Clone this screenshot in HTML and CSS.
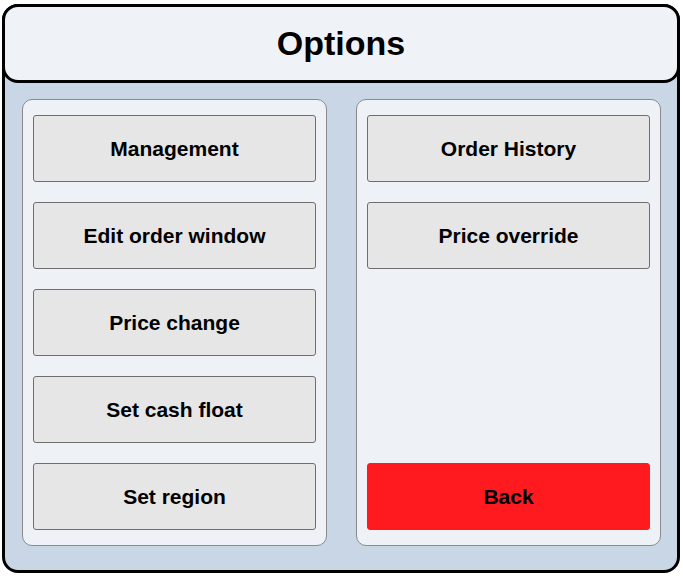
FILE: index.html
```html
<!DOCTYPE html>
<html>
<head>
<meta charset="utf-8">
<link rel="stylesheet" href="styles.css">
</head>
<body>
<div class="frame">
  <div class="header"><h1 class="title">Options</h1></div>
  <div class="content">
    <div class="panel">
      <button class="btn">Management</button>
      <button class="btn">Edit order window</button>
      <button class="btn">Price change</button>
      <button class="btn">Set cash float</button>
      <button class="btn">Set region</button>
    </div>
    <div class="panel">
      <button class="btn">Order History</button>
      <button class="btn">Price override</button>
      <button class="btn btn-back">Back</button>
    </div>
  </div>
</div>
</body>
</html>
```
FILE: styles.css
```css
html, body {
  margin: 0;
  padding: 0;
  background: #ffffff;
}
body {
  font-family: "Liberation Sans", Arial, sans-serif;
  padding: 4px 3px 0 2px;
}
.frame {
  box-sizing: border-box;
  width: 678px;
  height: 569px;
  border: 3px solid #000;
  border-radius: 16px;
  background: #c9d6e5;
  display: flex;
  flex-direction: column;
}
.header {
  box-sizing: border-box;
  margin: -3px -3px 0 -3px;
  height: 79px;
  border: 3px solid #000;
  border-radius: 16px;
  background: #eff2f7;
  display: flex;
  align-items: center;
  justify-content: center;
}
.title {
  margin: 0;
  font-size: 34px;
  font-weight: bold;
  color: #000;
  line-height: 1;
  padding-bottom: 2px;
}
.content {
  display: flex;
  gap: 29px;
  padding: 16px 15px 0 17px;
}
.panel {
  box-sizing: border-box;
  flex: 0 0 305px;
  width: 305px;
  height: 447px;
  background: #eef2f7;
  border: 1px solid #8a8a8a;
  border-radius: 10px;
  padding: 15px 10px 15px 10px;
  display: flex;
  flex-direction: column;
  gap: 20px;
}
.btn {
  box-sizing: border-box;
  height: 67px;
  flex: 0 0 67px;
  width: 100%;
  background: #e6e6e6;
  border: 1px solid #6e6e6e;
  border-radius: 3px;
  font-family: "Liberation Sans", Arial, sans-serif;
  font-size: 21px;
  font-weight: bold;
  color: #000;
  padding: 0;
}
.btn-back {
  margin-top: auto;
  background: #ff1a1f;
  border-color: #ff1a1f;
}
```
